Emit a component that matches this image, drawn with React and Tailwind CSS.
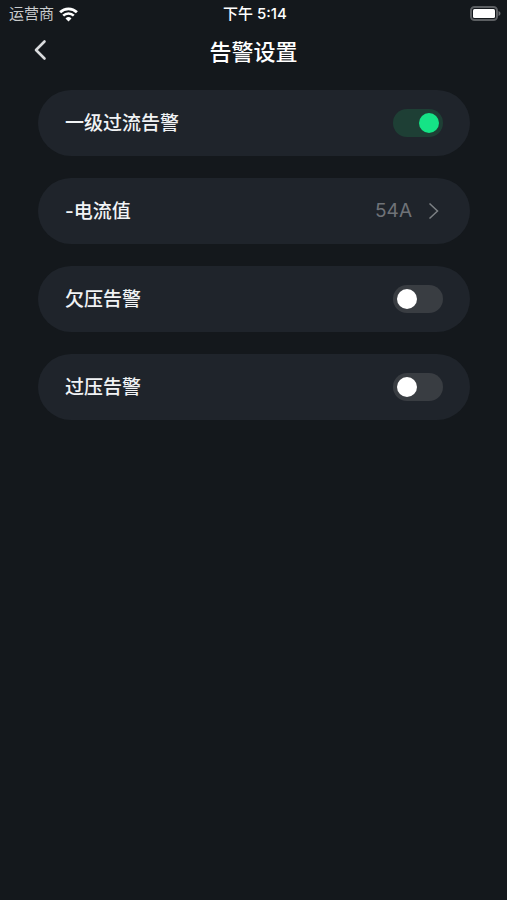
import React, { useState } from "react";

function WifiIcon() {
  return (
    <svg width="19" height="15" viewBox="0 0 19 15" fill="none" aria-hidden="true">
      <path d="M1.100 5.200a12.100 12.100 0 0 1 16.800 0" stroke="#fff" strokeWidth="2.800" />
      <path d="M4.200 8.600a7.600 7.600 0 0 1 10.600 0" stroke="#fff" strokeWidth="2.600" />
      <path d="M9.500 14.600 6.500 11.500a4.300 4.300 0 0 1 6 0z" fill="#fff" />
    </svg>
  );
}

function BatteryIcon() {
  return (
    <svg width="31" height="15" viewBox="0 0 31 15" fill="none" aria-hidden="true">
      <rect x="1" y="1" width="26" height="13" rx="3.500" stroke="#5c5f62" strokeWidth="2" />
      <rect x="3" y="3" width="22" height="9" rx="1.500" fill="#fff" />
      <path d="M28.500 5v5c1.200-.4 2-1.400 2-2.500s-.8-2.100-2-2.500z" fill="#6a6d70" />
    </svg>
  );
}

function StatusBar() {
  return (
    <div className="grid h-7 grid-cols-3 items-center pr-1.5 pl-[9px] text-[15px] leading-5 text-white">
      <div className="flex items-center gap-[5px] text-[#c9cbcd]">
        <span>运营商</span>
        <WifiIcon />
      </div>
      <div className="text-center font-medium">下午 5:14</div>
      <div className="flex justify-end pb-0.5">
        <BatteryIcon />
      </div>
    </div>
  );
}

function Header({ title }) {
  return (
    <header className="grid h-12 grid-cols-[40px_1fr_40px] items-center px-5">
      <button type="button" aria-label="返回" className="flex h-10 w-10 items-center justify-center">
        <svg width="14" height="22" viewBox="0 0 14 22" fill="none" aria-hidden="true" className="mb-1">
          <path
            d="M11.500 2.500 3 11l8.500 8.500"
            stroke="#d9dbdd"
            strokeWidth="2.600"
            strokeLinecap="round"
            strokeLinejoin="round"
          />
        </svg>
      </button>
      <h1 className="text-center text-[22px] font-medium text-white">{title}</h1>
    </header>
  );
}

const rowClass =
  "flex h-[66px] w-full items-center justify-between rounded-full bg-[#1f242b] px-[27px] text-[19px] leading-7 font-medium text-[#f1f3f5]";

function SwitchRow({ label, checked, onChange }) {
  return (
    <label className={rowClass}>
      <span className="pt-0.5">{label}</span>
      <input
        type="checkbox"
        role="switch"
        checked={checked}
        onChange={onChange}
        className="flex h-7 w-[50px] shrink-0 appearance-none items-center rounded-full bg-[#393d42] px-1 before:h-5 before:w-5 before:rounded-full before:bg-white checked:justify-end checked:bg-[#1e3f35] checked:before:bg-[#15e486]"
      />
    </label>
  );
}

function ValueRow({ label, value }) {
  return (
    <button type="button" className={rowClass}>
      <span className="pt-0.5">{label}</span>
      <span className="flex items-center gap-4 pr-1 font-normal text-[#6f7378]">
        {value}
        <svg width="11" height="18" viewBox="0 0 11 18" fill="none" aria-hidden="true">
          <path d="M1.500 1.500 9.500 9l-8 7.500" stroke="#7c8084" strokeWidth="1.500" />
        </svg>
      </span>
    </button>
  );
}

export default function App() {
  const [overCurrent, setOverCurrent] = useState(true);
  const [underVoltage, setUnderVoltage] = useState(false);
  const [overVoltage, setOverVoltage] = useState(false);

  return (
    <div className="min-h-screen bg-[#14181c] font-['Inter','Noto_Sans_CJK_SC',sans-serif]">
      <StatusBar />
      <Header title="告警设置" />
      <main className="flex flex-col gap-[22px] pt-3.5 pr-[37px] pl-[38px]">
        <SwitchRow
          label="一级过流告警"
          checked={overCurrent}
          onChange={(e) => setOverCurrent(e.target.checked)}
        />
        <ValueRow label="-电流值" value="54A" />
        <SwitchRow
          label="欠压告警"
          checked={underVoltage}
          onChange={(e) => setUnderVoltage(e.target.checked)}
        />
        <SwitchRow
          label="过压告警"
          checked={overVoltage}
          onChange={(e) => setOverVoltage(e.target.checked)}
        />
      </main>
    </div>
  );
}
